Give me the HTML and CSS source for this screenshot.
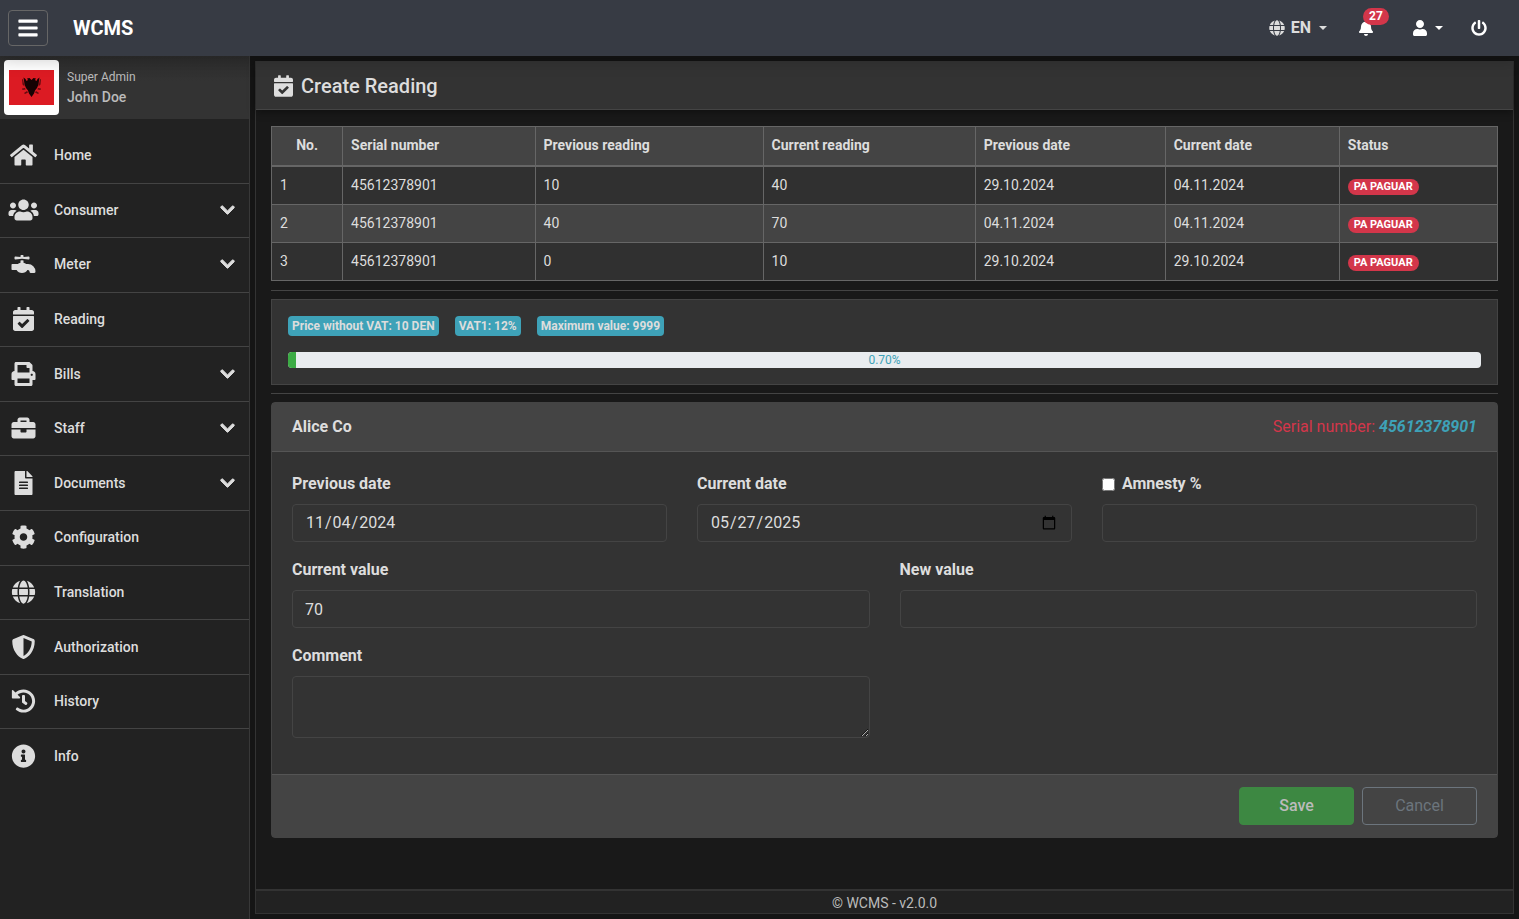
FILE: index.html
```html
<!DOCTYPE html>
<html lang="en">
<head>
    <meta charset="UTF-8">
    <meta name="viewport" content="width=device-width, initial-scale=1.0">
    <title>WCMS - Create Reading</title>
    <link rel="stylesheet" href="styles.css">
</head>
<body>
    <!-- Icon sprite -->
    <svg class="sprite" aria-hidden="true">
        <symbol id="bars" viewBox="0 0 448 512"><path d="M16 132h416c8.837 0 16-7.163 16-16V76c0-8.837-7.163-16-16-16H16C7.163 60 0 67.163 0 76v40c0 8.837 7.163 16 16 16zm0 160h416c8.837 0 16-7.163 16-16v-40c0-8.837-7.163-16-16-16H16c-8.837 0-16 7.163-16 16v40c0 8.837 7.163 16 16 16zm0 160h416c8.837 0 16-7.163 16-16v-40c0-8.837-7.163-16-16-16H16c-8.837 0-16 7.163-16 16v40c0 8.837 7.163 16 16 16z"/></symbol>
        <symbol id="globe" viewBox="0 0 496 512"><path d="M336.5 160C322 70.7 287.8 8 248 8s-74 62.7-88.5 152h177zM152 256c0 22.2 1.2 43.5 3.3 64h185.3c2.1-20.5 3.3-41.8 3.3-64s-1.2-43.5-3.3-64H155.3c-2.1 20.5-3.3 41.8-3.3 64zm324.7-96c-28.6-67.9-86.5-120.4-158-141.6 24.4 33.8 41.2 84.7 50 141.6h108zM177.2 18.4C105.8 39.6 47.8 92.1 19.3 160h108c8.7-56.9 25.5-107.8 49.9-141.6zM487.4 192H372.7c2.1 21 3.3 42.5 3.3 64s-1.2 43-3.3 64h114.6c5.5-20.5 8.6-41.8 8.6-64s-3.1-43.5-8.5-64zM120 256c0-21.5 1.2-43 3.3-64H8.6C3.2 212.5 0 233.8 0 256s3.2 43.5 8.6 64h114.6c-2-21-3.2-42.5-3.2-64zm39.5 96c14.5 89.3 48.7 152 88.5 152s74-62.7 88.5-152h-177zm159.3 141.6c71.4-21.2 129.4-73.7 158-141.6h-108c-8.8 56.9-25.6 107.8-50 141.6zM19.3 352c28.6 67.9 86.5 120.4 158 141.6-24.4-33.8-41.2-84.7-50-141.6h-108z"/></symbol>
        <symbol id="bell" viewBox="0 0 448 512"><path d="M224 512c35.32 0 63.97-28.65 63.97-64H160.03c0 35.35 28.65 64 63.97 64zm215.39-149.71c-19.32-20.76-55.47-51.99-55.47-154.29 0-77.7-54.48-139.9-127.94-155.16V32c0-17.67-14.32-32-31.98-32s-31.98 14.33-31.98 32v20.84C118.56 68.1 64.08 130.3 64.08 208c0 102.3-36.15 133.53-55.47 154.29-6 6.45-8.66 14.16-8.61 21.71.11 16.4 12.98 32 32.1 32h383.8c19.12 0 32-15.6 32.1-32 .05-7.55-2.61-15.27-8.61-21.71z"/></symbol>
        <symbol id="user" viewBox="0 0 448 512"><path d="M224 256c70.7 0 128-57.3 128-128S294.7 0 224 0 96 57.3 96 128s57.3 128 128 128zm89.6 32h-16.7c-22.2 10.2-46.9 16-72.9 16s-50.6-5.8-72.9-16h-16.7C60.2 288 0 348.2 0 422.4V464c0 26.5 21.5 48 48 48h352c26.5 0 48-21.5 48-48v-41.6c0-74.2-60.2-134.4-134.4-134.4z"/></symbol>
        <symbol id="power" viewBox="0 0 512 512"><path d="M400 54.1c63 45 104 118.6 104 201.9 0 136.8-110.8 247.7-247.5 248C120 504.3 8.2 393 8 256.4 7.9 173.1 48.9 99.3 111.8 54.2c11.7-8.3 28-4.8 35 7.7L162.6 90c5.9 10.5 3.1 23.8-6.6 31-41.5 30.8-68 79.6-68 134.9-.1 92.3 74.5 168.1 168 168.1 91.6 0 168.6-74.2 168-169.1-.3-51.8-24.7-101.8-68.1-134-9.7-7.2-12.4-20.5-6.5-30.9l15.8-28.1c7-12.4 23.2-16.1 34.8-7.8zM296 264V24c0-13.3-10.7-24-24-24h-32c-13.3 0-24 10.7-24 24v240c0 13.3 10.7 24 24 24h32c13.3 0 24-10.7 24-24z"/></symbol>
        <symbol id="home" viewBox="0 0 576 512"><path d="M280.37 148.26L96 300.11V464a16 16 0 0 0 16 16l112.06-.29a16 16 0 0 0 15.92-16V368a16 16 0 0 1 16-16h64a16 16 0 0 1 16 16v95.64a16 16 0 0 0 16 16.05L464 480a16 16 0 0 0 16-16V300L295.67 148.26a12.19 12.19 0 0 0-15.3 0zM571.6 251.47L488 182.56V44.05a12 12 0 0 0-12-12h-56a12 12 0 0 0-12 12v72.61L318.47 43a48 48 0 0 0-61 0L4.34 251.47a12 12 0 0 0-1.6 16.9l25.5 31A12 12 0 0 0 45.15 301l235.22-193.74a12.19 12.19 0 0 1 15.3 0L530.9 301a12 12 0 0 0 16.9-1.6l25.5-31a12 12 0 0 0-1.7-16.93z"/></symbol>
        <symbol id="users" viewBox="0 0 640 512"><path d="M96 224c35.3 0 64-28.7 64-64s-28.7-64-64-64-64 28.7-64 64 28.7 64 64 64zm448 0c35.3 0 64-28.7 64-64s-28.7-64-64-64-64 28.7-64 64 28.7 64 64 64zm32 32h-64c-17.6 0-33.5 7.1-45.1 18.6 40.3 22.1 68.9 62 75.1 109.4h66c17.7 0 32-14.3 32-32v-32c0-35.3-28.7-64-64-64zm-256 0c61.9 0 112-50.1 112-112S381.9 32 320 32 208 82.1 208 144s50.1 112 112 112zm76.8 32h-8.3c-20.8 10-43.9 16-68.5 16s-47.6-6-68.5-16h-8.3C179.6 288 128 339.6 128 403.2V432c0 26.5 21.5 48 48 48h288c26.5 0 48-21.5 48-48v-28.8c0-63.6-51.6-115.2-115.2-115.2zm-223.7-13.4C161.5 263.1 145.6 256 128 256H64c-35.3 0-64 28.7-64 64v32c0 17.7 14.3 32 32 32h65.9c6.3-47.4 34.9-87.3 75.2-109.4z"/></symbol>
        <symbol id="faucet" viewBox="0 0 512 512"><path d="M352,256H313.39c-15.71-13.44-35.46-23.07-57.39-28V180.44l-32-3.38-32,3.38V228c-21.93,5-41.68,14.6-57.39,28H16A16,16,0,0,0,0,272v96a16,16,0,0,0,16,16h92.79C129.38,421.73,173,448,224,448s94.62-26.27,115.21-64H352a32,32,0,0,1,32,32,32,32,0,0,0,32,32h64a32,32,0,0,0,32-32A160,160,0,0,0,352,256ZM81.59,159.91l142.41-15,142.41,15c9.42,1,17.59-6.81,17.59-16.8V112.89c0-10-8.17-17.8-17.59-16.81L256,107.74V80a16,16,0,0,0-16-16H208a16,16,0,0,0-16,16v27.74L81.59,96.08C72.17,95.09,64,102.9,64,112.89v30.22C64,153.1,72.17,160.91,81.59,159.91Z"/></symbol>
        <symbol id="calendar" viewBox="0 0 448 512"><path d="M436 160H12c-6.627 0-12-5.373-12-12v-36c0-26.51 21.49-48 48-48h48V12c0-6.627 5.373-12 12-12h40c6.627 0 12 5.373 12 12v52h128V12c0-6.627 5.373-12 12-12h40c6.627 0 12 5.373 12 12v52h48c26.51 0 48 21.49 48 48v36c0 6.627-5.373 12-12 12zM12 192h424c6.627 0 12 5.373 12 12v260c0 26.51-21.49 48-48 48H48c-26.51 0-48-21.49-48-48V204c0-6.627 5.373-12 12-12zm333.296 95.947l-28.169-28.398c-4.667-4.705-12.265-4.736-16.97-.068L194.12 364.665l-45.98-46.352c-4.667-4.705-12.266-4.736-16.971-.068l-28.397 28.17c-4.705 4.667-4.736 12.265-.068 16.97l82.601 83.269c4.667 4.705 12.265 4.736 16.97.068l142.953-141.805c4.705-4.667 4.736-12.265.068-16.97z"/></symbol>
        <symbol id="print" viewBox="0 0 512 512"><path d="M448 192V77.25c0-8.49-3.37-16.62-9.37-22.63L393.37 9.37c-6-6-14.14-9.37-22.63-9.37H96C78.33 0 64 14.33 64 32v160c-35.35 0-64 28.65-64 64v112c0 8.84 7.16 16 16 16h48v96c0 17.67 14.33 32 32 32h320c17.67 0 32-14.33 32-32v-96h48c8.84 0 16-7.16 16-16V256c0-35.35-28.65-64-64-64zm-64 256H128v-96h256v96zm0-224H128V64h192v48c0 8.84 7.16 16 16 16h48v96zm48 72c-13.25 0-24-10.75-24-24 0-13.26 10.75-24 24-24s24 10.74 24 24c0 13.25-10.75 24-24 24z"/></symbol>
        <symbol id="briefcase" viewBox="0 0 512 512"><path d="M320 336c0 8.84-7.16 16-16 16h-96c-8.84 0-16-7.16-16-16v-48H0v144c0 25.6 22.4 48 48 48h416c25.6 0 48-22.4 48-48V288H320v48zm144-208h-80V80c0-25.6-22.4-48-48-48H176c-25.6 0-48 22.4-48 48v48H48c-25.6 0-48 22.4-48 48v80h512v-80c0-25.6-22.4-48-48-48zm-144 0H192V96h128v32z"/></symbol>
        <symbol id="file" viewBox="0 0 384 512"><path d="M224 136V0H24C10.7 0 0 10.7 0 24v464c0 13.3 10.7 24 24 24h336c13.3 0 24-10.7 24-24V160H248c-13.2 0-24-10.8-24-24zm64 236c0 6.6-5.4 12-12 12H108c-6.6 0-12-5.4-12-12v-8c0-6.6 5.4-12 12-12h168c6.6 0 12 5.4 12 12v8zm0-64c0 6.6-5.4 12-12 12H108c-6.6 0-12-5.4-12-12v-8c0-6.6 5.4-12 12-12h168c6.6 0 12 5.4 12 12v8zm0-72v8c0 6.6-5.4 12-12 12H108c-6.6 0-12-5.4-12-12v-8c0-6.6 5.4-12 12-12h168c6.6 0 12 5.4 12 12zm96-114.1v6.1H256V0h6.1c6.4 0 12.5 2.5 17 7l97.9 98c4.5 4.5 7 10.6 7 16.9z"/></symbol>
        <symbol id="cog" viewBox="0 0 512 512"><path d="M487.4 315.7l-42.6-24.6c4.3-23.2 4.3-47 0-70.2l42.6-24.6c4.9-2.8 7.1-8.6 5.5-14-11.1-35.6-30-67.8-54.7-94.6-3.8-4.1-10-5.1-14.8-2.3L380.8 110c-17.9-15.4-38.5-27.3-60.8-35.1V25.8c0-5.6-3.9-10.5-9.4-11.7-36.7-8.2-74.3-7.8-109.2 0-5.5 1.2-9.4 6.1-9.4 11.7V75c-22.2 7.9-42.8 19.8-60.8 35.1L88.7 85.5c-4.9-2.8-11-1.9-14.8 2.3-24.7 26.7-43.6 58.9-54.7 94.6-1.7 5.4.6 11.2 5.5 14L67.3 221c-4.3 23.2-4.3 47 0 70.2l-42.6 24.6c-4.9 2.8-7.1 8.6-5.5 14 11.1 35.6 30 67.8 54.7 94.6 3.8 4.1 10 5.1 14.8 2.3l42.6-24.6c17.9 15.4 38.5 27.3 60.8 35.1v49.2c0 5.6 3.9 10.5 9.4 11.7 36.7 8.2 74.3 7.8 109.2 0 5.5-1.2 9.4-6.1 9.4-11.7v-49.2c22.2-7.9 42.8-19.8 60.8-35.1l42.6 24.6c4.9 2.8 11 1.9 14.8-2.3 24.7-26.7 43.6-58.9 54.7-94.6 1.5-5.5-.7-11.3-5.6-14.1zM256 336c-44.1 0-80-35.9-80-80s35.9-80 80-80 80 35.9 80 80-35.9 80-80 80z"/></symbol>
        <symbol id="shield" viewBox="0 0 512 512"><path d="M466.5 83.7l-192-80a48.15 48.15 0 0 0-36.9 0l-192 80C27.7 91.1 16 108.6 16 128c0 198.5 114.5 335.7 221.5 380.3 11.8 4.9 25.1 4.9 36.9 0C360.1 472.6 496 349.3 496 128c0-19.4-11.7-36.9-29.5-44.3zM256.1 446.3l-.1-381 175.9 73.3c-3.3 151.4-82.1 261.1-175.8 307.7z"/></symbol>
        <symbol id="history" viewBox="0 0 512 512"><path d="M504 255.531c.253 136.64-111.18 248.372-247.82 248.468-59.015.042-113.223-20.53-155.822-54.911-11.077-8.94-11.905-25.541-1.839-35.607l11.267-11.267c8.609-8.609 22.353-9.551 31.891-1.984C173.062 425.135 212.781 440 256 440c101.705 0 184-82.311 184-184 0-101.705-82.311-184-184-184-48.814 0-93.149 18.969-126.068 49.932l50.754 50.754c10.08 10.08 2.941 27.314-11.313 27.314H24c-8.837 0-16-7.163-16-16V38.627c0-14.254 17.234-21.393 27.314-11.314l49.372 49.372C129.209 34.136 189.552 8 256 8c136.81 0 247.747 110.78 248 247.531zm-180.912 78.784l9.823-12.63c8.138-10.463 6.253-25.542-4.21-33.679L288 256.349V152c0-13.255-10.745-24-24-24h-16c-13.255 0-24 10.745-24 24v135.651l65.409 50.874c10.463 8.137 25.541 6.253 33.679-4.21z"/></symbol>
        <symbol id="info" viewBox="0 0 512 512"><path d="M256 8C119.043 8 8 119.083 8 256c0 136.997 111.043 248 248 248s248-111.003 248-248C504 119.083 392.957 8 256 8zm0 110c23.196 0 42 18.804 42 42s-18.804 42-42 42-42-18.804-42-42 18.804-42 42-42zm56 254c0 6.627-5.373 12-12 12h-88c-6.627 0-12-5.373-12-12v-24c0-6.627 5.373-12 12-12h12v-64h-12c-6.627 0-12-5.373-12-12v-24c0-6.627 5.373-12 12-12h64c6.627 0 12 5.373 12 12v100h12c6.627 0 12 5.373 12 12v24z"/></symbol>
        <symbol id="chevron" viewBox="0 0 448 512"><path d="M207.029 381.476L12.686 187.132c-9.373-9.373-9.373-24.569 0-33.941l22.667-22.667c9.357-9.357 24.522-9.375 33.901-.04L224 284.505l154.745-154.021c9.379-9.335 24.544-9.317 33.901.04l22.667 22.667c9.373 9.373 9.373 24.569 0 33.941L240.971 381.476c-9.373 9.372-24.569 9.372-33.942 0z"/></symbol>
    </svg>

    <!-- Navbar -->
    <header class="navbar">
        <button class="toggle" type="button" aria-label="Toggle sidebar"><svg><use href="#bars"/></svg></button>
        <a class="brand" href="#">WCMS</a>
        <nav class="nav-right">
            <button class="nav-btn lang" type="button"><svg><use href="#globe"/></svg>EN<span class="caret"></span></button>
            <button class="nav-btn bell" type="button" aria-label="Notifications"><svg><use href="#bell"/></svg><span class="count">27</span></button>
            <button class="nav-btn" type="button" aria-label="Account"><svg><use href="#user"/></svg><span class="caret"></span></button>
            <button class="nav-btn" type="button" aria-label="Log out"><svg><use href="#power"/></svg></button>
        </nav>
    </header>

    <div class="wrapper">
        <!-- Sidebar -->
        <aside class="sidebar">
            <div class="profile">
                <div class="avatar">
                    <svg viewBox="0 0 45 35" role="img" aria-label="Albania">
                        <rect width="45" height="35" fill="#dc1b23"/>
                        <g fill="#160203">
                            <path d="M22.500 10L20.500 8l-2.500.500 1 1.500-1.500 1-1-2-2-1.500.500 3 .500 4 1.500 3.500 2 2.500 1 3 2.500 3.500 2.500-3.500 1-3 2-2.500 1.500-3.500.500-4 .500-3-2 1.500-1 2-1.500-1 1-1.500-2.500-.500z"/>
                            <path d="M14 9l-1 .500.500 5 2 2zM31 9l1 .500-.500 5-2 2zM16 18l-3 .500.500 1.500 3-.500zM29 18l3 .500-.500 1.500-3-.500zM18 21l-3 2 1 1 3-1.500zM27 21l3 2-1 1-3-1.500z" opacity=".6"/>
                        </g>
                    </svg>
                </div>
                <div class="profile-text">
                    <div class="role">Super Admin</div>
                    <div class="name">John Doe</div>
                </div>
            </div>
            <ul class="menu">
                <li><a href="#"><svg class="icon"><use href="#home"/></svg>Home</a></li>
                <li><a href="#"><svg class="icon"><use href="#users"/></svg>Consumer<svg class="arrow"><use href="#chevron"/></svg></a></li>
                <li><a href="#"><svg class="icon"><use href="#faucet"/></svg>Meter<svg class="arrow"><use href="#chevron"/></svg></a></li>
                <li><a href="#"><svg class="icon"><use href="#calendar"/></svg>Reading</a></li>
                <li><a href="#"><svg class="icon"><use href="#print"/></svg>Bills<svg class="arrow"><use href="#chevron"/></svg></a></li>
                <li><a href="#"><svg class="icon"><use href="#briefcase"/></svg>Staff<svg class="arrow"><use href="#chevron"/></svg></a></li>
                <li><a href="#"><svg class="icon"><use href="#file"/></svg>Documents<svg class="arrow"><use href="#chevron"/></svg></a></li>
                <li><a href="#"><svg class="icon"><use href="#cog"/></svg>Configuration</a></li>
                <li><a href="#"><svg class="icon"><use href="#globe"/></svg>Translation</a></li>
                <li><a href="#"><svg class="icon"><use href="#shield"/></svg>Authorization</a></li>
                <li><a href="#"><svg class="icon"><use href="#history"/></svg>History</a></li>
                <li><a href="#"><svg class="icon"><use href="#info"/></svg>Info</a></li>
            </ul>
        </aside>

        <!-- Content -->
        <main class="content">
            <h1 class="page-title"><svg><use href="#calendar"/></svg>Create Reading</h1>
            <div class="page-body">
                <table class="readings">
                    <thead>
                        <tr>
                            <th>No.</th>
                            <th>Serial number</th>
                            <th>Previous reading</th>
                            <th>Current reading</th>
                            <th>Previous date</th>
                            <th>Current date</th>
                            <th>Status</th>
                        </tr>
                    </thead>
                    <tbody>
                        <tr>
                            <td>1</td>
                            <td>45612378901</td>
                            <td>10</td>
                            <td>40</td>
                            <td>29.10.2024</td>
                            <td>04.11.2024</td>
                            <td><span class="pill">PA PAGUAR</span></td>
                        </tr>
                        <tr>
                            <td>2</td>
                            <td>45612378901</td>
                            <td>40</td>
                            <td>70</td>
                            <td>04.11.2024</td>
                            <td>04.11.2024</td>
                            <td><span class="pill">PA PAGUAR</span></td>
                        </tr>
                        <tr>
                            <td>3</td>
                            <td>45612378901</td>
                            <td>0</td>
                            <td>10</td>
                            <td>29.10.2024</td>
                            <td>29.10.2024</td>
                            <td><span class="pill">PA PAGUAR</span></td>
                        </tr>
                    </tbody>
                </table>
                <hr>
                <section class="limits">
                    <div class="badges">
                        <span class="badge">Price without VAT: 10 DEN</span>
                        <span class="badge">VAT1: 12%</span>
                        <span class="badge">Maximum value: 9999</span>
                    </div>
                    <div class="progress" role="progressbar" aria-valuenow="0.7" aria-valuemin="0" aria-valuemax="100">
                        <div class="progress-bar" style="width: 0.7%"></div>
                        <span class="progress-text">0.70%</span>
                    </div>
                </section>
                <hr>
                <!-- Reading form -->
                <form class="card">
                    <div class="card-header">
                        <strong>Alice Co</strong>
                        <span class="serial">Serial number: <b><i>45612378901</i></b></span>
                    </div>
                    <div class="card-body">
                        <div class="field third">
                            <label for="previous-date">Previous date</label>
                            <input type="date" id="previous-date" value="2024-11-04" readonly>
                        </div>
                        <div class="field third">
                            <label for="current-date">Current date</label>
                            <input type="date" id="current-date" value="2025-05-27">
                        </div>
                        <div class="field third">
                            <label class="check" for="amnesty"><input type="checkbox" id="amnesty">Amnesty %</label>
                            <input type="text" id="amnesty-value" aria-label="Amnesty value" readonly>
                        </div>
                        <div class="field half">
                            <label for="current-value">Current value</label>
                            <input type="text" id="current-value" value="70" readonly>
                        </div>
                        <div class="field half">
                            <label for="new-value">New value</label>
                            <input type="text" id="new-value">
                        </div>
                        <div class="field half">
                            <label for="comment">Comment</label>
                            <textarea id="comment" rows="2"></textarea>
                        </div>
                    </div>
                    <div class="card-footer">
                        <button class="btn save" type="submit" disabled>Save</button>
                        <button class="btn cancel" type="button" disabled>Cancel</button>
                    </div>
                </form>
            </div>
            <footer class="footer">© WCMS - v2.0.0</footer>
        </main>
    </div>
</body>
</html>
```
FILE: styles.css
```css
* {
    box-sizing: border-box;
}

body {
    margin: 0;
    min-height: 100vh;
    display: flex;
    flex-direction: column;
    font-family: Roboto, 'Liberation Sans', sans-serif;
    font-size: 16px;
    line-height: 24px;
    color: #ddd;
    background-color: #151515;
}

a {
    color: inherit;
    text-decoration: none;
}

button {
    font-family: inherit;
    font-size: 16px;
    line-height: 24px;
    cursor: pointer;
}

svg {
    fill: currentColor;
    flex-shrink: 0;
}

hr {
    margin: 8px 0;
    border: 0;
    border-top: 1px solid #444;
}

.sprite {
    display: none;
}

/* Navbar */
.navbar {
    display: flex;
    align-items: center;
    height: 56px;
    padding: 0 32px 0 8px;
    color: #fff;
    background-color: #373b44;
    box-shadow: 0 4px 16px rgba(0, 0, 0, 0.2);
    position: relative;
}

.toggle {
    display: flex;
    align-items: center;
    justify-content: center;
    width: 40px;
    height: 36px;
    padding: 0;
    color: #fff;
    background: none;
    border: 1px solid #666;
    border-radius: 4px;
}

.toggle svg {
    width: 20px;
    height: 22px;
}

.brand {
    margin-left: 25px;
    font-size: 20px;
    font-weight: 700;
}

.nav-right {
    display: flex;
    align-items: center;
    gap: 28px;
    margin-left: auto;
}

.nav-btn {
    display: flex;
    align-items: center;
    position: relative;
    padding: 0;
    color: #fff;
    background: none;
    border: 0;
}

.nav-btn svg {
    width: 16px;
    height: 16px;
}

.lang {
    gap: 6px;
    color: #ddd;
    font-weight: 700;
}

.caret {
    margin-left: 7px;
    border-top: 4px solid;
    border-left: 4px solid transparent;
    border-right: 4px solid transparent;
}

.lang .caret {
    margin-left: 2px;
}

.bell {
    margin: 0 10px 0 3px;
}

/* Unread counter over the bell */
.count {
    position: absolute;
    left: 5px;
    top: -12px;
    padding: 0 6px;
    font-size: 12px;
    font-weight: 700;
    line-height: 17px;
    background-color: #d3364a;
    border-radius: 10px;
}

/* Sidebar */
.wrapper {
    display: flex;
    flex: 1;
}

.sidebar {
    width: 250px;
    flex-shrink: 0;
    background-color: #222;
    border-right: 1px solid #383838;
}

.profile {
    display: flex;
    align-items: center;
    gap: 8px;
    height: 63px;
    padding: 0 4px;
    color: #bbb;
    background: linear-gradient(#2d2d2d, #333 40%);
}

.profile-text {
    padding-bottom: 2px;
}

.avatar {
    display: flex;
    align-items: center;
    width: 55px;
    height: 55px;
    padding: 5px;
    background-color: #fff;
    border-radius: 4px;
}

.avatar svg {
    width: 45px;
    height: 35px;
}

.role {
    font-size: 12px;
    line-height: 20px;
}

.name {
    font-size: 14px;
    font-weight: 500;
    line-height: 20px;
}

.menu {
    display: grid;
    grid-auto-rows: 1fr;
    height: 655px;
    margin: 10px 0 0;
    padding: 0;
    list-style: none;
}

.menu li {
    border-bottom: 1px solid #444;
}

.menu li:last-child {
    border-bottom: 0;
}

.menu a {
    display: flex;
    align-items: center;
    height: 100%;
    padding: 0 14px 1px 8px;
    font-size: 14px;
    font-weight: 500;
}

.icon {
    width: 31px;
    height: 24px;
    margin-right: 15px;
}

.arrow {
    width: 15px;
    height: 16px;
    margin-left: auto;
    stroke: currentColor;
    stroke-width: 32px;
}

/* Content */
.content {
    display: flex;
    flex-direction: column;
    flex: 1;
    margin: 5px;
    background-color: #191919;
    border: 1px solid #333;
    border-top: 0;
}

.page-title {
    display: flex;
    align-items: center;
    gap: 8px;
    margin: 0;
    padding: 13px 18px 11px;
    font-size: 20px;
    font-weight: 500;
    background-color: #333;
    border-bottom: 1px solid #444;
    box-shadow: 0 2px 8px rgba(0, 0, 0, 0.4);
}

.page-title svg {
    width: 19px;
    height: 22px;
}

.page-body {
    flex: 1;
    padding: 16px 15px;
}

.readings {
    width: 100%;
    margin-bottom: 9px;
    font-size: 14px;
    line-height: 22px;
    border-collapse: collapse;
    table-layout: fixed;
    background-color: #303030;
}

.readings th,
.readings td {
    padding: 7px 8px 8px;
    text-align: left;
    border: 1px solid #666;
}

.readings th {
    padding-bottom: 9px;
    font-weight: 700;
    background-color: #444;
    border-bottom-width: 2px;
}

.readings tbody tr:nth-child(even) {
    background-color: #444;
}

.readings th:nth-child(1) { width: 5.8%; text-align: center; }
.readings th:nth-child(2) { width: 15.7%; }
.readings th:nth-child(3) { width: 18.6%; }
.readings th:nth-child(4) { width: 17.3%; }
.readings th:nth-child(5) { width: 15.5%; }
.readings th:nth-child(6) { width: 14.2%; }

.pill {
    display: inline-block;
    padding: 0 6px;
    font-size: 11px;
    font-weight: 700;
    line-height: 16px;
    color: #fff;
    background-color: #d3364a;
    border-radius: 8px;
}

.limits {
    padding: 16px;
    background-color: #333;
    border: 1px solid #444;
}

.badges {
    display: flex;
    gap: 16px;
    margin-bottom: 16px;
}

.badge {
    padding: 0 4px;
    font-size: 12px;
    font-weight: 700;
    line-height: 20px;
    background-color: #3ea2b8;
    border-radius: 4px;
}

.progress {
    position: relative;
    height: 16px;
    overflow: hidden;
    background-color: #e9ecef;
    border-radius: 4px;
}

.progress-bar {
    height: 100%;
    background-color: #3cab45;
}

.progress-text {
    position: absolute;
    inset: 0;
    font-size: 12px;
    line-height: 16px;
    text-align: center;
    color: #3ea2b8;
}

/* Form card */
.card {
    background-color: #333;
    border: 1px solid #444;
    border-radius: 4px;
}

.card-header {
    display: flex;
    justify-content: space-between;
    padding: 12px 20px;
    background-color: #444;
    border-bottom: 1px solid #555;
}

.serial {
    color: #d3364a;
}

.serial b {
    color: #3ea2b8;
}

.card-body {
    display: grid;
    grid-template-columns: repeat(6, 1fr);
    gap: 16px 30px;
    padding: 20px 20px 36px;
}

.third {
    grid-column: span 2;
}

.half {
    grid-column: span 3;
}

.field label {
    display: block;
    margin-bottom: 8px;
    font-weight: 700;
}

.field .check {
    display: flex;
    align-items: center;
    gap: 7px;
}

.check input {
    width: 13px;
    height: 13px;
    margin: 0;
}

.field > input,
.field textarea {
    display: block;
    width: 100%;
    height: 38px;
    padding: 6px 12px;
    font-family: inherit;
    font-size: 16px;
    line-height: 24px;
    color: #ddd;
    background-color: #333;
    border: 1px solid #444;
    border-radius: 4px;
}

.field textarea {
    height: 62px;
    resize: vertical;
}

.card-footer {
    display: flex;
    justify-content: flex-end;
    gap: 8px;
    padding: 12px 20px;
    background-color: #444;
    border-top: 1px solid #555;
}

.btn {
    width: 115px;
    height: 38px;
    border: 1px solid;
    border-radius: 4px;
}

.save {
    color: #bbb;
    font-weight: 500;
    background-color: #3d8842;
    border-color: #3d8842;
}

.cancel {
    color: #6c757d;
    background: none;
}

.footer {
    padding-top: 2px;
    font-size: 14px;
    line-height: 20px;
    text-align: center;
    color: #bbb;
    background-color: #222;
    border-top: 2px solid #333;
}
```
